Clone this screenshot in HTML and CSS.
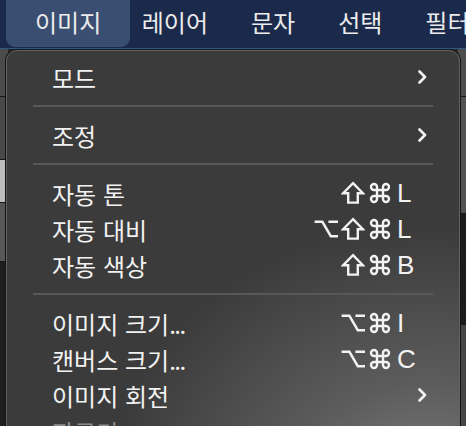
FILE: index.html
```html
<!DOCTYPE html>
<html lang="ko">
<head>
  <meta charset="UTF-8" />
  <title>이미지 메뉴</title>
  <link rel="stylesheet" href="styles.css">
</head>
<body>

  <div class="menubar">
    <span class="bar-item active">이미지</span>
    <span class="bar-item">레이어</span>
    <span class="bar-item">문자</span>
    <span class="bar-item">선택</span>
    <span class="bar-item">필터</span>
  </div>

  <!-- photoshop panels peeking out behind the menu -->
  <div class="workspace">
    <div class="side side-left">
      <div class="strip s-a"></div>
      <div class="strip s-b"></div>
      <div class="strip s-c"></div>
      <div class="strip s-d"></div>
      <div class="strip s-e"></div>
    </div>
    <div class="side side-right">
      <div class="strip r-a"></div>
      <div class="strip r-b"></div>
      <div class="strip r-c"></div>
      <div class="strip r-d"></div>
    </div>
  </div>

  <div class="menu">
    <div class="row">
      <span class="label">모드</span>
      <svg class="chev" width="9" height="14" viewBox="0 0 9 14"><polyline points="1.5,1.5 7,7 1.5,12.5" /></svg>
    </div>
    <div class="sep"></div>
    <div class="row">
      <span class="label">조정</span>
      <svg class="chev" width="9" height="14" viewBox="0 0 9 14"><polyline points="1.5,1.5 7,7 1.5,12.5" /></svg>
    </div>
    <div class="sep"></div>
    <div class="row">
      <span class="label">자동 톤</span>
      <span class="sc">
        <svg class="mod" viewBox="0 0 20 20"><path d="M10 1.8 L18.2 10.2 H14 V18 H6 V10.2 H1.8 Z" /></svg>
        <svg class="mod" viewBox="0 0 20 20"><path d="M7.5 7.5 V5 A2.5 2.5 0 1 0 5 7.5 H15 A2.5 2.5 0 1 0 12.5 5 V15 A2.5 2.5 0 1 0 15 12.5 H5 A2.5 2.5 0 1 0 7.5 15 Z" /></svg>
        <span class="key">L</span>
      </span>
    </div>
    <div class="row">
      <span class="label">자동 대비</span>
      <span class="sc">
        <svg class="mod" viewBox="0 0 20 20"><path d="M0.5 4 H7 L14 16 H20 M12 4 H20" /></svg>
        <svg class="mod" viewBox="0 0 20 20"><path d="M10 1.8 L18.2 10.2 H14 V18 H6 V10.2 H1.8 Z" /></svg>
        <svg class="mod" viewBox="0 0 20 20"><path d="M7.5 7.5 V5 A2.5 2.5 0 1 0 5 7.5 H15 A2.5 2.5 0 1 0 12.5 5 V15 A2.5 2.5 0 1 0 15 12.5 H5 A2.5 2.5 0 1 0 7.5 15 Z" /></svg>
        <span class="key">L</span>
      </span>
    </div>
    <div class="row">
      <span class="label">자동 색상</span>
      <span class="sc">
        <svg class="mod" viewBox="0 0 20 20"><path d="M10 1.8 L18.2 10.2 H14 V18 H6 V10.2 H1.8 Z" /></svg>
        <svg class="mod" viewBox="0 0 20 20"><path d="M7.5 7.5 V5 A2.5 2.5 0 1 0 5 7.5 H15 A2.5 2.5 0 1 0 12.5 5 V15 A2.5 2.5 0 1 0 15 12.5 H5 A2.5 2.5 0 1 0 7.5 15 Z" /></svg>
        <span class="key">B</span>
      </span>
    </div>
    <div class="sep"></div>
    <div class="row">
      <span class="label">이미지 크기<span class="dots">...</span></span>
      <span class="sc">
        <svg class="mod" viewBox="0 0 20 20"><path d="M0.5 4 H7 L14 16 H20 M12 4 H20" /></svg>
        <svg class="mod" viewBox="0 0 20 20"><path d="M7.5 7.5 V5 A2.5 2.5 0 1 0 5 7.5 H15 A2.5 2.5 0 1 0 12.5 5 V15 A2.5 2.5 0 1 0 15 12.5 H5 A2.5 2.5 0 1 0 7.5 15 Z" /></svg>
        <span class="key">I</span>
      </span>
    </div>
    <div class="row">
      <span class="label">캔버스 크기<span class="dots">...</span></span>
      <span class="sc">
        <svg class="mod" viewBox="0 0 20 20"><path d="M0.5 4 H7 L14 16 H20 M12 4 H20" /></svg>
        <svg class="mod" viewBox="0 0 20 20"><path d="M7.5 7.5 V5 A2.5 2.5 0 1 0 5 7.5 H15 A2.5 2.5 0 1 0 12.5 5 V15 A2.5 2.5 0 1 0 15 12.5 H5 A2.5 2.5 0 1 0 7.5 15 Z" /></svg>
        <span class="key">C</span>
      </span>
    </div>
    <div class="row">
      <span class="label">이미지 회전</span>
      <svg class="chev" width="9" height="14" viewBox="0 0 9 14"><polyline points="1.5,1.5 7,7 1.5,12.5" /></svg>
    </div>
    <div class="row disabled">
      <span class="label">자르기</span>
    </div>
  </div>

</body>
</html>
```

FILE: styles.css
```css
body {
  margin: 0;
  width: 466px;
  height: 426px;
  overflow: hidden;
  position: relative;
  background-color: #2a2a2a;
  font-family: 'Noto Sans CJK KR', 'Noto Sans', sans-serif;
  color: #f2f2f2;
}

.menubar {
  height: 48px;
  display: flex;
  align-items: flex-start;
  padding-left: 6px;
  background-color: #1b2a4a;
  border-bottom: 1px solid #2f5580;
  font-size: 24px;
  color: #ececec;
  white-space: nowrap;
  overflow: hidden;
}

.bar-item {
  flex-shrink: 0;
  padding: 0 21.5px;
  line-height: 44px;
}

.bar-item.active {
  padding: 0 29px;
  margin-right: -10px;
  height: 47px;
  background-color: #3a4e72;
  border-radius: 0 0 9px 9px;
}

.workspace {
  display: flex;
  justify-content: space-between;
  height: 377px;
}

.side {
  width: 8px;
  display: flex;
  flex-direction: column;
}

.strip {
  border-bottom: 1px solid #161616;
}

.s-a { height: 47px; background: #4b4b4b; }
.s-b { height: 62px; background: #484848; }
.s-c { height: 42px; background: #bdbdbd; }
.s-d { height: 58px; background: #575757; }
.s-e { flex: 1; background: #1f1f1f; border: none; }

.r-a { height: 47px; background: #4d4d4d; }
.r-b { height: 116px; background: #525252; }
.r-c { height: 110px; background: #1c1c1c; }
.r-d { flex: 1; background: #464646; border: none; }

.menu {
  position: absolute;
  left: 6px;
  top: 50px;
  width: 454px;
  height: 420px;
  padding-top: 8px;
  border: 1px solid #626262;
  border-radius: 11px;
  box-shadow: 0 0 0 1px #151515;
  background: radial-gradient(ellipse 320px 270px at 420px 445px, #7e7e7e 0%, #5c5c5c 42%, #3b3b3b 100%);
  box-sizing: border-box;
}

.row {
  height: 36px;
  display: flex;
  align-items: center;
  padding: 0 32px 0 45px;
  font-size: 24px;
}

.label {
  flex: 1;
}

.dots {
  letter-spacing: -1.5px;
}

.disabled {
  color: #8a8a8a;
}

.chev {
  fill: none;
  stroke: #f2f2f2;
  stroke-width: 2.6;
  stroke-linecap: round;
  stroke-linejoin: round;
}

.sc {
  display: flex;
  align-items: center;
  gap: 3px;
}

.mod {
  width: 24px;
  height: 24px;
  fill: none;
  stroke: #f2f2f2;
  stroke-width: 2;
}

.key {
  width: 30px;
  padding-left: 2px;
  font-family: 'Liberation Sans', sans-serif;
  font-size: 26px;
}

.sep {
  height: 2px;
  margin: 10px 26px;
  background-color: #585858;
}
```
